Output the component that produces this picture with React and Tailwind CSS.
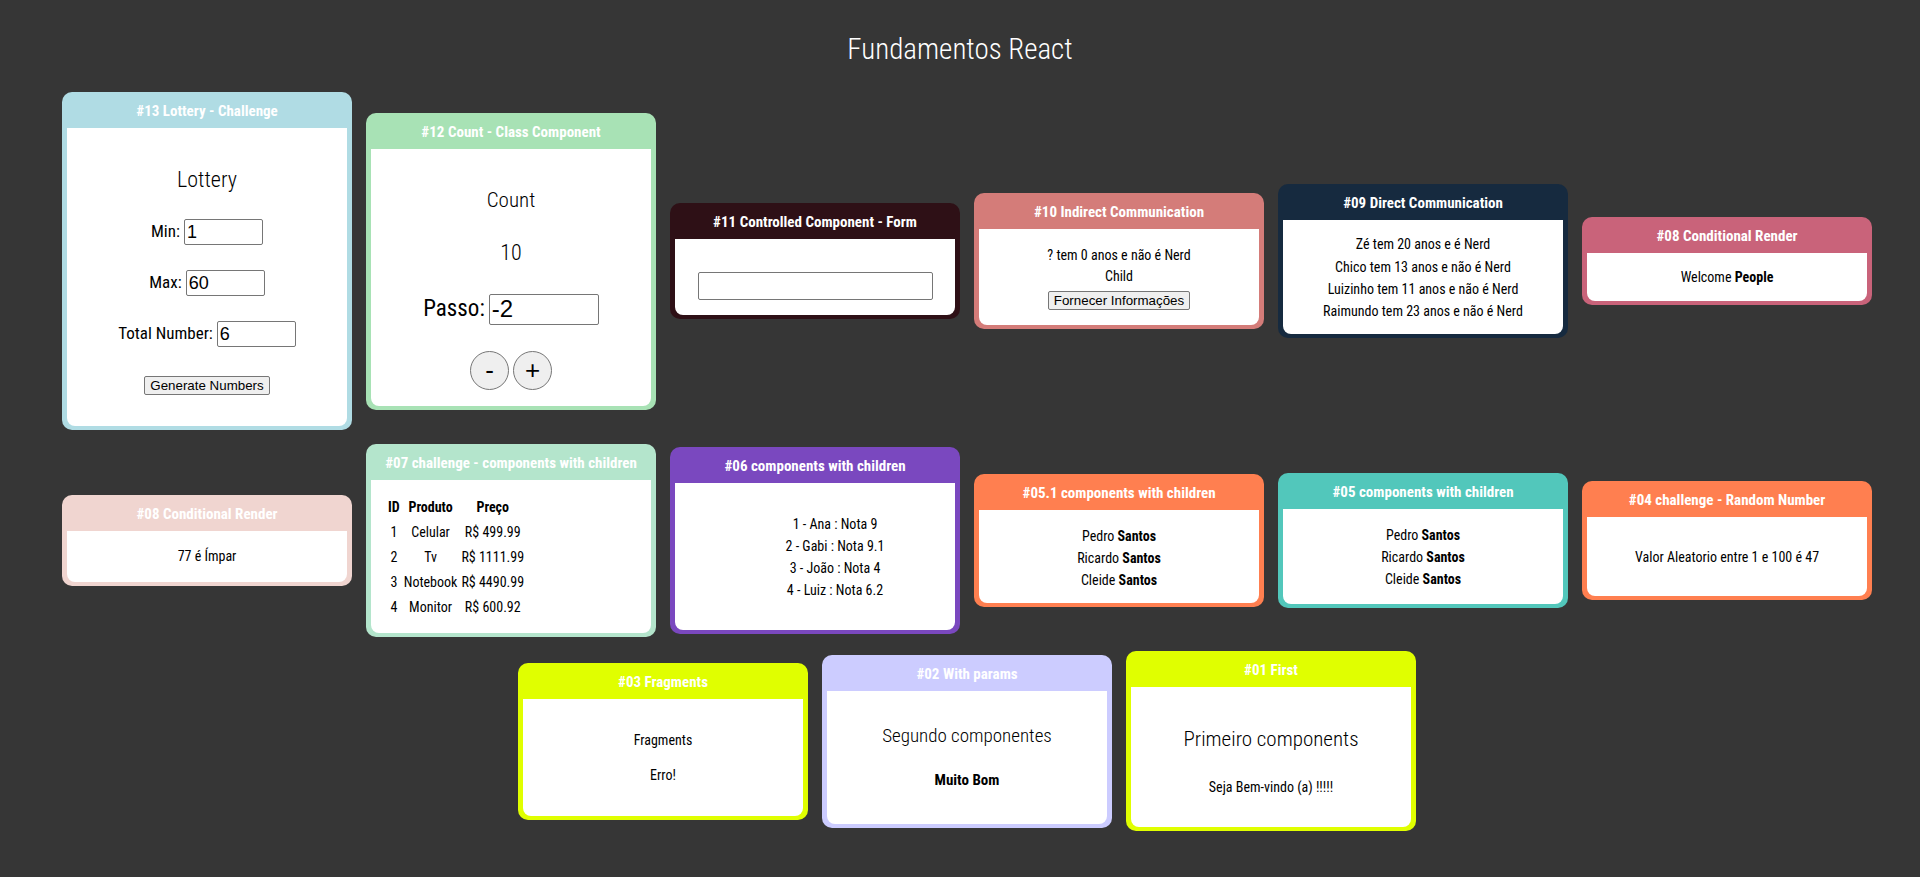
import React from 'react';

const Card = ({ title, color, bodyClassName = '', children }) => {
    return (
        <div className={`w-[290px] shrink-0 rounded-[10px] px-[5px] pb-[4px] ${color}`}>
            <div className="h-[36px] pt-[7px] text-center text-[15px] leading-[24px] font-bold text-white whitespace-nowrap">{title}</div>
            <div className={`bg-white rounded-b-[8px] text-center text-black ${bodyClassName}`}>{children}</div>
        </div>
    );
};

const inputCls = "border border-[#767676] rounded-[2px] bg-white px-[2px] font-['Liberation_Sans',Arial,sans-serif] font-stretch-normal text-black";
const btnCls = "border border-[#767676] rounded-[2px] bg-[#efefef] font-['Liberation_Sans',Arial,sans-serif] font-stretch-normal text-[13.33px] leading-[15px] px-[5px] h-[19px] text-black";
const roundBtn = "w-[39px] h-[39px] rounded-full border border-[#767676] bg-[#efefef] font-['Liberation_Sans',Arial,sans-serif] font-stretch-normal text-[26px] leading-[26px]";

const App = () => {
    return (
        <div className="min-h-screen bg-[#363636] font-['Roboto_Condensed','Open_Sans_Condensed','Roboto',sans-serif] font-stretch-condensed pb-[40px]">
            <div className="h-[92px] pt-[8px] flex items-center justify-center">
                <h1 className="text-[29px] font-light text-white">Fundamentos React</h1>
            </div>

            <div className="flex flex-wrap justify-center items-center gap-[14px] pl-[14px]">
                {/* #13 */}
                <Card title="#13 Lottery - Challenge" color="bg-[#b0dce4]" bodyClassName="flex flex-col items-center gap-[25px] pt-[38px] pb-[31px]">
                    <h2 className="h-[28px] text-[22px] leading-[28px] font-light">Lottery</h2>
                    <div className="h-[26px] flex items-center gap-[4px] text-[17px]">
                        <label>Min:</label>
                        <input className={`${inputCls} w-[79px] h-[26px] text-[18px]`} defaultValue="1" />
                    </div>
                    <div className="h-[26px] flex items-center gap-[4px] text-[17px]">
                        <label>Max:</label>
                        <input className={`${inputCls} w-[79px] h-[26px] text-[18px]`} defaultValue="60" />
                    </div>
                    <div className="h-[26px] flex items-center gap-[4px] text-[17px]">
                        <label>Total Number:</label>
                        <input className={`${inputCls} w-[79px] h-[26px] text-[18px]`} defaultValue="6" />
                    </div>
                    <button className={`${btnCls} mt-[4px]`}>Generate Numbers</button>
                </Card>

                {/* #12 */}
                <Card title="#12 Count - Class Component" color="bg-[#a8e2b5]" bodyClassName="flex flex-col items-center pt-[37px] pb-[16px]">
                    <h2 className="h-[28px] text-[21px] leading-[28px] font-light">Count</h2>
                    <h2 className="h-[28px] mt-[25px] text-[22px] leading-[28px] font-light">10</h2>
                    <div className="h-[31px] mt-[27px] flex items-center gap-[4px] text-[23px]">
                        <label>Passo:</label>
                        <input className={`${inputCls} w-[110px] h-[31px] text-[24px]`} defaultValue="-2" />
                    </div>
                    <div className="mt-[26px] flex gap-[4px]">
                        <button className={roundBtn}>-</button>
                        <button className={roundBtn}>+</button>
                    </div>
                </Card>

                {/* #11 */}
                <Card title="#11 Controlled Component - Form" color="bg-[#2e1016]" bodyClassName="pt-[33px] pb-[15px] flex justify-center">
                    <input className={`${inputCls} w-[235px] h-[28px] text-[14px]`} />
                </Card>

                {/* #10 */}
                <Card title="#10 Indirect Communication" color="bg-[#d47c79]" bodyClassName="pt-[16px] pb-[14px] text-[14px] leading-[21px]">
                    <div>? tem 0 anos e não é Nerd</div>
                    <div>Child</div>
                    <button className={`${btnCls} mt-[4px]`}>Fornecer Informações</button>
                </Card>

                {/* #09 */}
                <Card title="#09 Direct Communication" color="bg-[#162a3f]" bodyClassName="pt-[13px] pb-[11px] text-[14px] leading-[22.3px]">
                    <div>Zé tem 20 anos e é Nerd</div>
                    <div>Chico tem 13 anos e não é Nerd</div>
                    <div>Luizinho tem 11 anos e não é Nerd</div>
                    <div>Raimundo tem 23 anos e não é Nerd</div>
                </Card>

                {/* #08 */}
                <Card title="#08 Conditional Render" color="bg-[#c9637a]" bodyClassName="pt-[14px] pb-[13px] text-[14px] leading-[21px]">
                    <div>Welcome <b>People</b></div>
                </Card>

                {/* #08 par/impar */}
                <Card title="#08 Conditional Render" color="bg-[#f0d5d0]" bodyClassName="pt-[15px] pb-[15px] text-[14px] leading-[21px]">
                    <div>77 é Ímpar</div>
                </Card>

                {/* #07 */}
                <Card title="#07 challenge - components with children" color="bg-[#b4e5cc]" bodyClassName="pt-[14px] pb-[12px] pl-[14px] text-[14px] leading-[21px]">
                    <table className="border-separate border-spacing-[2px]">
                        <thead>
                            <tr>
                                <th className="p-[1px]">ID</th>
                                <th className="p-[1px]">Produto</th>
                                <th className="p-[1px]">Preço</th>
                            </tr>
                        </thead>
                        <tbody>
                            <tr><td className="p-[1px]">1</td><td className="p-[1px]">Celular</td><td className="p-[1px]">R$ 499.99</td></tr>
                            <tr><td className="p-[1px]">2</td><td className="p-[1px]">Tv</td><td className="p-[1px]">R$ 1111.99</td></tr>
                            <tr><td className="p-[1px]">3</td><td className="p-[1px]">Notebook</td><td className="p-[1px]">R$ 4490.99</td></tr>
                            <tr><td className="p-[1px]">4</td><td className="p-[1px]">Monitor</td><td className="p-[1px]">R$ 600.92</td></tr>
                        </tbody>
                    </table>
                </Card>

                {/* #06 */}
                <Card title="#06 components with children" color="bg-[#7a48bf]" bodyClassName="pt-[30px] pb-[29px] pl-[40px] text-[14px] leading-[22px]">
                    <div>1 - Ana : Nota 9</div>
                    <div>2 - Gabi : Nota 9.1</div>
                    <div>3 - João : Nota 4</div>
                    <div>4 - Luiz : Nota 6.2</div>
                </Card>

                {/* #05.1 */}
                <Card title="#05.1 components with children" color="bg-[#ff7f50]" bodyClassName="pt-[15px] pb-[12px] text-[14px] leading-[22px]">
                    <div>Pedro <b>Santos</b></div>
                    <div>Ricardo <b>Santos</b></div>
                    <div>Cleide <b>Santos</b></div>
                </Card>

                {/* #05 */}
                <Card title="#05 components with children" color="bg-[#52c7bb]" bodyClassName="pt-[15px] pb-[14px] text-[14px] leading-[22px]">
                    <div>Pedro <b>Santos</b></div>
                    <div>Ricardo <b>Santos</b></div>
                    <div>Cleide <b>Santos</b></div>
                </Card>

                {/* #04 */}
                <Card title="#04 challenge - Random Number" color="bg-[#ff7f50]" bodyClassName="pt-[29px] pb-[28px] text-[14px] leading-[22px]">
                    <div>Valor Aleatorio entre 1 e 100 é 47</div>
                </Card>

                {/* #03 */}
                <Card title="#03 Fragments" color="bg-[#e0ff00]" bodyClassName="pt-[31px] pb-[30px] text-[14px] leading-[21px]">
                    <div>Fragments</div>
                    <div className="mt-[14px]">Erro!</div>
                </Card>

                {/* #02 */}
                <Card title="#02 With params" color="bg-[#ccccff]" bodyClassName="pt-[31px] pb-[33px]">
                    <h2 className="text-[19px] leading-[28px] font-light">Segundo componentes</h2>
                    <div className="mt-[20px] text-[15px] leading-[21px] font-bold">Muito Bom</div>
                </Card>

                {/* #01 */}
                <Card title="#01 First" color="bg-[#e0ff00]" bodyClassName="pt-[37px] pb-[29px]">
                    <h2 className="text-[21px] leading-[30px] font-light">Primeiro components</h2>
                    <div className="mt-[22px] text-[14px] leading-[22px]">Seja Bem-vindo (a) !!!!!</div>
                </Card>
            </div>
        </div>
    );
};

export default App;
